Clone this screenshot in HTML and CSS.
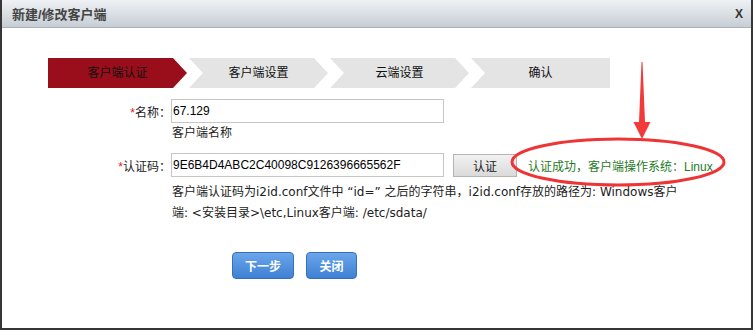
FILE: index.html
```html
<!DOCTYPE html>
<html>

<head>
    <title>新建/修改客户端</title>
    <meta charset="utf-8">
    <link rel="stylesheet" href="styles.css">
</head>

<body>
    <div class="dialog">
        <div class="dialog-head">
            <span class="dialog-title">新建/修改客户端</span>
            <span class="dialog-close">X</span>
        </div>

        <div class="steps">
            <div class="step step-first active">客户端认证</div>
            <div class="step">客户端设置</div>
            <div class="step">云端设置</div>
            <div class="step step-last">确认</div>
        </div>

        <div class="form">
            <div class="row">
                <label class="label"><span class="req">*</span>名称：</label>
                <input class="field" type="text" value="67.129">
            </div>
            <div class="hint">客户端名称</div>

            <div class="row row-code">
                <label class="label"><span class="req">*</span>认证码：</label>
                <input class="field" type="text" value="9E6B4D4ABC2C40098C9126396665562F">
                <button class="btn-gray">认证</button>
                <span class="ok-msg">认证成功，客户端操作系统：Linux</span>
            </div>
            <div class="help">客户端认证码为i2id.conf文件中 “id=” 之后的字符串，i2id.conf存放的路径为: Windows客户端: &lt;安装目录&gt;\etc,Linux客户端: /etc/sdata/</div>

            <div class="actions">
                <button class="btn-blue btn-next">下一步</button>
                <button class="btn-blue btn-close">关闭</button>
            </div>
        </div>

        <svg class="marks" width="753" height="330" viewBox="0 0 753 330">
            <polygon points="641.5,62 642.5,62 645,122 650.5,122 642,139 633.5,122 639,122" fill="#f23a3a" />
            <ellipse cx="618" cy="162" rx="106" ry="23" fill="none" stroke="#ee3434" stroke-width="3" />
        </svg>
    </div>
</body>

</html>
```

FILE: styles.css
```css
body {
    margin: 0;
    font-family: "Liberation Sans", "Noto Sans CJK SC", sans-serif;
    font-size: 12px;
    color: #222;
}

.dialog {
    position: relative;
    width: 753px;
    height: 330px;
    box-sizing: border-box;
    border: 2px solid #363636;
    border-top: 0;
    background: #fff;
}

.dialog-head {
    height: 27px;
    border-bottom: 1px solid #aab2ba;
    background: linear-gradient(#eef2f5, #c6cdd4);
    display: flex;
    align-items: center;
    justify-content: space-between;
    padding: 0 8px 0 10px;
}

.dialog-title {
    font-size: 13px;
    font-weight: bold;
    color: #444;
}

.dialog-close {
    font-size: 12px;
    font-weight: bold;
    color: #333;
}

.steps {
    display: flex;
    margin-top: 30px;
    padding-left: 46px;
}

.step {
    width: 139px;
    height: 30px;
    margin-right: 2px;
    line-height: 30px;
    text-align: center;
    font-size: 12px;
    color: #111;
    background: #e4e4e4;
    clip-path: polygon(0 0, 125px 0, 139px 50%, 125px 100%, 0 100%, 14px 50%);
}

.step-first {
    clip-path: polygon(0 0, 125px 0, 139px 50%, 125px 100%, 0 100%);
}

.step-last {
    clip-path: polygon(0 0, 100% 0, 100% 100%, 0 100%, 14px 50%);
}

.step.active {
    background: #9a0e1b;
}

.form {
    margin-top: 11px;
    padding-left: 46px;
}

.row {
    display: flex;
    align-items: center;
}

.label {
    width: 123px;
    text-align: right;
}

.req {
    color: #e02020;
}

.field {
    width: 273px;
    height: 24px;
    box-sizing: border-box;
    border: 1px solid #c6c6c6;
    padding: 0 1px;
    font-family: "Liberation Sans", sans-serif;
    font-size: 12px;
    color: #000;
    margin: 0;
}

.hint {
    margin-left: 124px;
    line-height: 20px;
}

.row-code {
    margin-top: 10px;
}

.btn-gray {
    margin-left: 9px;
    width: 64px;
    height: 23px;
    border: 1px solid #b4b4b4;
    background: linear-gradient(#f2f2f2, #dadada);
    font-family: "Noto Sans CJK SC", sans-serif;
    font-size: 12px;
    color: #222;
    padding: 0;
}

.ok-msg {
    margin-left: 11px;
    color: #1f7a1f;
}

.help {
    margin: 5px 0 0 124px;
    width: 520px;
    line-height: 21px;
    font-family: "DejaVu Sans", "Noto Sans CJK SC", sans-serif;
}

.actions {
    display: flex;
    gap: 12px;
    margin: 28px 0 0 184px;
}

.btn-blue {
    height: 27px;
    border: 1px solid #3b6eb6;
    border-radius: 4px;
    background: linear-gradient(#6aa6ea, #3f80d4);
    color: #fff;
    font-family: "Noto Sans CJK SC", sans-serif;
    font-weight: bold;
    font-size: 12px;
    padding: 0;
}

.btn-next {
    width: 62px;
}

.btn-close {
    width: 51px;
}

.marks {
    position: absolute;
    top: 0;
    left: -2px;
    pointer-events: none;
}
```
